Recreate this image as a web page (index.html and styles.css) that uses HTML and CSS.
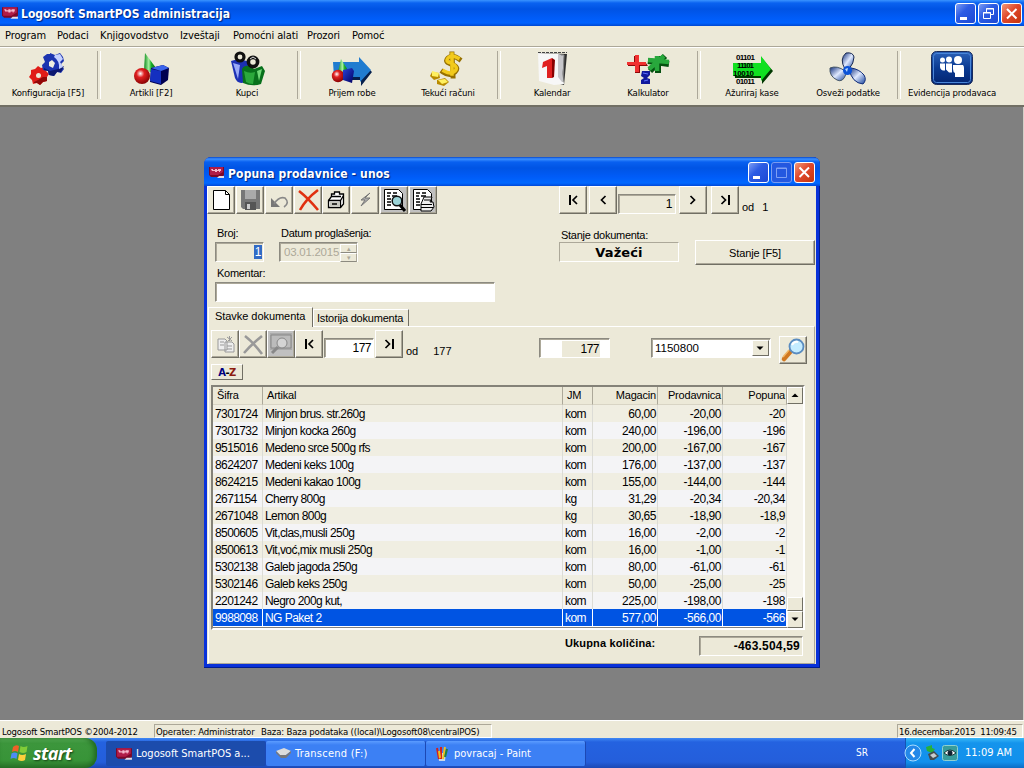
FILE: index.html
```html
<!DOCTYPE html>
<html lang="sr">
<head>
<meta charset="utf-8">
<title>Logosoft SmartPOS administracija</title>
<link rel="stylesheet" href="styles.css">
</head>
<body>
<svg class="defs" width="0" height="0">
  <defs>
    <radialGradient id="gRed" cx=".4" cy=".35" r=".7"><stop offset="0" stop-color="#fff"/><stop offset=".35" stop-color="#e02020"/><stop offset="1" stop-color="#800000"/></radialGradient>
    <linearGradient id="gGreen"><stop offset="0" stop-color="#0a8a1a"/><stop offset=".4" stop-color="#a8f0a0"/><stop offset=".6" stop-color="#18b028"/><stop offset="1" stop-color="#065c0c"/></linearGradient>
    <linearGradient id="gBlue" x1="0" y1="0" x2="1" y2="1"><stop offset="0" stop-color="#2a42d8"/><stop offset="1" stop-color="#000060"/></linearGradient>
    <linearGradient id="gBlade" x1="0" y1="0" x2="1" y2="1"><stop offset="0" stop-color="#0c2a78"/><stop offset=".5" stop-color="#dfe9ff"/><stop offset="1" stop-color="#16429c"/></linearGradient>
    <linearGradient id="gTile" x1="0" y1="0" x2="0" y2="1"><stop offset="0" stop-color="#2c62b8"/><stop offset=".5" stop-color="#0a3a92"/><stop offset="1" stop-color="#032470"/></linearGradient>
    <symbol id="logo" viewBox="0 0 16 13"><path d="M0 1H15V9L13 11H2L0 9Z" fill="#7c0828"/><path d="M1 1H14V6L9 9H1Z" fill="#b01c48"/><path d="M2 3h2v1h2v-1h2v1h1v-1h3v2h-1v1h-1v-1h-2v1h-2v-1h-3z" fill="#f5b8cc"/><path d="M8 12l2-2h5v2z" fill="#e6dce4"/></symbol>
    <symbol id="first" viewBox="0 0 28 28"><path d="M11 9v10" stroke="#000" stroke-width="2"/><path d="M18 10l-4 4 4 4" fill="none" stroke="#000" stroke-width="1.700"/></symbol>
    <symbol id="last" viewBox="0 0 28 28"><path d="M18 9v10" stroke="#000" stroke-width="2"/><path d="M10.500 10l4 4-4 4" fill="none" stroke="#000" stroke-width="1.700"/></symbol>
  </defs>
</svg>

<header class="titlebar">
  <svg width="17" height="14"><use href="#logo"/></svg>
  <h1>Logosoft SmartPOS administracija</h1>
  <div class="winbtns">
    <span class="wb"><svg width="20" height="20"><path d="M4 13h7v3H4z" fill="#fff"/></svg></span>
    <span class="wb"><svg width="20" height="20"><path d="M7.500 8V4.500h7v6H12M7 5h8" fill="none" stroke="#fff"/><path d="M4.500 8.500h7v6h-7zM4 9h8" fill="none" stroke="#fff"/></svg></span>
    <span class="wb close"><svg width="20" height="20"><path d="M5 5l9.500 9.500M14.500 5L5 14.500" stroke="#fff" stroke-width="2"/></svg></span>
  </div>
</header>

<nav class="menu"><span class="m1">Program</span><span class="m2">Podaci</span><span class="m3">Knjigovodstvo</span><span class="m4">Izveštaji</span><span class="m5">Pomoćni alati</span><span class="m6">Prozori</span><span class="m7">Pomoć</span></nav>

<section class="tools">
  <div class="group g0">
    <div class="tool">
      <svg width="44" height="36"><path d="M12 15l3 2 4-1 1 4 3 3-2 3v4l-4 1-3 3-3-2-4 1-1-4-3-3 2-3v-4l4-1z" fill="#e01c18"/><path d="M8 31l4-2 5-3 4 0v4l-4 1-3 3-3-2-3 0z" fill="#900808"/><circle cx="12.500" cy="24.500" r="2.500" fill="#ece9d8"/><path d="M24 2l5 2 5-2 3 4 1 4-3 3 3 5-3 4-4-1-3 4-5-1-1-4-5-1-1-5 3-3-2-5 4-3h3z" fill="#1c34b0"/><path d="M18 17l6 3 8-2 6-3-3 6-4 0-3 4-5-1-1-4-4-1z" fill="#0c1870"/><path d="M29 4l5-1 3 5-3 3 3 5-4 2q1-8-5-12z" fill="#c4d0ff"/><path d="M26 9l3 3-2 5-4-2v-4z" fill="#f0eee0"/></svg>
      <span>Konfiguracija [F5]</span></div>
  </div>
  <div class="group">
    <div class="tool">
      <svg width="44" height="36"><path d="M16 2L27 17l-5 4-7-1z" fill="url(#gGreen)"/><circle cx="13" cy="25" r="8" fill="url(#gRed)"/><path d="M22 17l12-3 6 3-1 12-7 5-11-3z" fill="#000050"/><path d="M22 18l10 2v13l-11-3z" fill="#1430c0"/><path d="M22 17l12-3 6 3-8 3z" fill="#3a64ec"/></svg>
      <span>Artikli [F2]</span></div>
    <div class="tool">
      <svg width="44" height="36"><path d="M6 10q8-3 19 1l-5 20q-7 3-10-4z" fill="#1c30b4"/><path d="M8 12l5 16 2-14z" fill="#9aaaf8"/><circle cx="15" cy="6" r="4" fill="none" stroke="#111" stroke-width="3.200"/><path d="M17 18q2-4 8-3l4 3 8-3 3 5-4 13q-9 3-18-1z" fill="#08701c"/><path d="M19 20q6 3 11 1l-2 12q-4 0-7-2z" fill="#2ba83c"/><path d="M32 20l5-2-3 12z" fill="#70d878"/><circle cx="28" cy="11" r="4.600" fill="none" stroke="#111" stroke-width="3.600"/><path d="M25 8l3-2 3 2" stroke="#ddd" fill="none"/></svg>
      <span>Kupci</span></div>
  </div>
  <div class="group">
    <div class="tool">
      <svg width="44" height="36"><path d="M4 12h25V8l13 13-11 14v-6H8z" fill="#06204c"/><path d="M3 11h26V6l12 13-11 12v-5H4z" fill="#207cd0"/><path d="M11 8l8 13H8z" fill="url(#gGreen)"/><circle cx="8" cy="25" r="6.200" fill="url(#gRed)"/><path d="M13 19l9-2 2 3-2 12-9-3z" fill="url(#gBlue)"/></svg>
      <span>Prijem robe</span></div>
    <div class="tool">
      <svg width="44" height="36"><g fill="none" stroke-linecap="square"><path d="M33 8q-7-5-11-1t3 6q9 3 4 8t-12 0M26 3l1 22" stroke="#967000" stroke-width="5"/><path d="M32 7q-7-4-10 0t3 5q8 4 4 8t-11 0M26 3l0 20" stroke="#f2ca1c" stroke-width="3.500"/></g><path d="M6 21l7 1 1 5-6 2-4-4zM11 29l8-2 4 4-5 4-7-2z" fill="#b88a00"/><path d="M6 20l7 2-1 4-6-1zM12 29l7-1 3 3-6 2z" fill="#fff060"/></svg>
      <span>Tekući računi</span></div>
  </div>
  <div class="group">
    <div class="tool">
      <svg width="44" height="36"><path d="M8 2l29 1-3 31-12-3z" fill="#303030"/><path d="M8 2l21 1 5 30-10 1-15-4z" fill="#f7f7f7"/><path d="M28 3l6 1-2 27-4-5z" fill="#c7c7cb"/><path d="M31 4l3 0-1 27" stroke="#888" fill="none"/><path d="M13 11l9-4v20h-5V15l-5 2z" fill="#e02020"/><path d="M22 7l3 2-1 17-2 1z" fill="#880000"/><path d="M8 1.500h29" stroke="#444" stroke-dasharray="3 1"/></svg>
      <span>Kalendar</span></div>
    <div class="tool">
      <svg width="44" height="36"><path d="M8 5h5v7h7l2 3h-8v7H9v-7H2v-4h6z" fill="#8c0808"/><path d="M9 4h4v7h7v3h-7v7H9v-7H1v-3h8z" fill="#f03030"/><g stroke="#055010" stroke-width="6"><path d="M32 5v17M22 10l21 3M39 5L24 20"/></g><g stroke="#28a83c" stroke-width="4.500"><path d="M31 5v15M22 9l21 2M38 5L23 18"/></g><path d="M16 20h8v4l-3 3 3 1v5h-9v-4l3-2-3-2z" fill="#10189c"/><path d="M17 22l5 1M18 30l4-1" stroke="#5c70ff"/></svg>
      <span>Kalkulator</span></div>
  </div>
  <div class="group">
    <div class="tool">
      <svg width="44" height="36"><path d="M4 13h27V6l12 14-11 13v-6H5z" fill="#003800"/><path d="M3 12h28V5l10 13-10 12v-5H3z" fill="#10e020"/><g class="bits"><text x="6" y="9" textLength="19">01101</text><text x="7" y="17" textLength="17">11101</text><text x="3" y="25" textLength="21">10010</text><text x="6" y="33" textLength="19">01011</text></g></svg>
      <span>Ažuriraj kase</span></div>
    <div class="tool">
      <svg width="44" height="36"><path d="M20 2q7-1 8 4 0 6-5 12h-4q-6-10 1-16z" fill="url(#gBlade)" stroke="#182850"/><path d="M19 20q-8-6-15-3-1 8 7 12 6 3 9-6z" fill="url(#gBlade)" stroke="#456"/><path d="M23 18q3 14 14 15 4-4 1-9-5-6-13-7z" fill="url(#gBlade)" stroke="#102c78"/><circle cx="21.500" cy="19.500" r="4.500" fill="#0a52d8"/><path d="M19 18l3-1-1 4z" fill="#bcdcff"/></svg>
      <span>Osveži podatke</span></div>
  </div>
  <div class="group last">
    <div class="tool">
      <svg width="44" height="36"><rect x="1.500" y=".5" width="41" height="33" rx="5" fill="url(#gTile)" stroke="#1a2c5c"/><rect x="3.500" y="2.500" width="37" height="29" rx="3" fill="none" stroke="#4a86d8"/><g fill="#fff"><circle cx="12.500" cy="9" r="2.500"/><circle cx="19" cy="8.500" r="3"/><circle cx="28" cy="9" r="4"/><path d="M10 12.500h5v7h-2q-3-1-3-4zM16 12.500h6v9h-3l-3-3zM23 14h10q1 1 1 3v9h-9v-4q-2-1-2-4z"/></g></svg>
      <span>Evidencija prodavaca</span></div>
  </div>
</section>

<main class="desk">
  <section class="win">
    <div class="wtitle">
      <svg width="16" height="13"><use href="#logo"/></svg>
      <h2>Popuna prodavnice - unos</h2>
      <div class="winbtns">
        <span class="wb"><svg width="19" height="19"><path d="M4 13h7v3H4z" fill="#fff"/></svg></span>
        <span class="wb off"><svg width="19" height="19"><path d="M4.500 5h10v9.500h-10zM4 5.500h11" fill="none" stroke="#7fa0f4"/></svg></span>
        <span class="wb close"><svg width="19" height="19"><path d="M4.500 4.500l9.500 9.500M14 4.500L4.500 14" stroke="#fff" stroke-width="2"/></svg></span>
      </div>
    </div>
    <div class="client">
      <div class="bar">
        <div class="iconrow">
          <span class="btn"><svg width="28" height="28"><path d="M6.500 4.500h12l4 4v15h-16z" fill="#fff" stroke="#000"/><path d="M18.500 4.500v4h4" fill="none" stroke="#000"/></svg></span>
          <span class="btn"><svg width="28" height="28"><path d="M5 4h19v19H7l-2-2z" fill="#777"/><path d="M9 4h11v9H9z" fill="#aaa"/><path d="M9 16h11v8H9z" fill="#555"/><path d="M11 18h3v5h-3z" fill="#ccc"/></svg></span>
          <span class="btn"><svg width="28" height="28"><path d="M6 12v9h9z" fill="#777"/><path d="M9 18q5-8 11-6 5 5-1 9" fill="none" stroke="#888" stroke-width="1.700"/></svg></span>
          <span class="btn"><svg width="28" height="28"><path d="M5 5q9 7 19 19M24 4Q12 13 6 24" stroke="#e03010" stroke-width="2.600" fill="none"/></svg></span>
          <span class="btn"><svg width="28" height="28"><path d="M6.500 14.500l3-4V8h3V6h5v2h4v10l-3 3.500H6.500z" fill="#fff" stroke="#000" stroke-width="1.300"/><path d="M10 10.500h9M6.500 14.500h12l3-5M18.500 14.500v7" fill="none" stroke="#000" stroke-width="1.300"/><path d="M8 16h10v5H8z" fill="#c8c8c0"/><path d="M10 18h5" stroke="#000" stroke-width="1.500"/></svg></span>
          <span class="btn"><svg width="28" height="28"><path d="M19 7l-9 7h4l-4 6 9-8h-5z" fill="#aaa" stroke="#777"/></svg></span>
          <span class="btn dk"><svg width="28" height="28"><path d="M4.500 3.500h14l4 4v16h-18z" fill="#fff" stroke="#000"/><path d="M7 7h4M13 7h4M7 10h3M12 10h5M7 13h4M7 16h4M7 19h4" stroke="#000" stroke-width="1.300"/><circle cx="17" cy="15" r="4.800" fill="#9cd4d8" stroke="#111" stroke-width="1.500"/><path d="M20 19l5 6" stroke="#000" stroke-width="3"/></svg></span>
          <span class="btn dk"><svg width="28" height="28"><path d="M4.500 3.500h14l4 4v16h-18z" fill="#fff" stroke="#000"/><path d="M7 7h4M13 7h4M7 10h3M12 10h5M7 13h4M7 16h4M7 19h4" stroke="#000" stroke-width="1.300"/><path d="M12 18l3-7h8l-2 5h3l1 5-3 4H12z" fill="#eee" stroke="#000"/><path d="M12 18.500h11M12 21.500h12M15 14h6" stroke="#000"/></svg></span>
        </div>
        <span class="btn n1"><svg width="28" height="28"><use href="#first"/></svg></span>
        <span class="btn n2"><svg width="28" height="28"><path d="M16.500 10l-4 4 4 4" fill="none" stroke="#000" stroke-width="1.700"/></svg></span>
        <span class="fld n3">1</span>
        <span class="btn n4"><svg width="28" height="28"><path d="M11.500 10l4 4-4 4" fill="none" stroke="#000" stroke-width="1.700"/></svg></span>
        <span class="btn n5"><svg width="28" height="28"><use href="#last"/></svg></span>
        <span class="od">od<b>1</b></span>
      </div>

      <div class="form">
        <div class="col c1"><label>Broj:</label><span class="fld"><mark>1</mark></span></div>
        <div class="col c2"><label>Datum proglašenja:</label><span class="fld date">03.01.2015<i><u>▴</u><u>▾</u></i></span></div>
        <div class="col c3"><label>Stanje dokumenta:</label><span class="thin state">Važeći</span></div>
        <button class="stanje">Stanje [F5]</button>
      </div>
      <div class="comment"><label>Komentar:</label><span class="fld white"></span></div>

      <div class="tabs"><span class="tab on">Stavke dokumenta</span><span class="tab">Istorija dokumenta</span></div>
      <div class="panel">
        <div class="bar2">
          <span class="btn"><svg width="28" height="28"><path d="M7 9h7l2 2v9H7zM14 12h7l2 2v8h-9z" fill="#eee" stroke="#999"/><path d="M9 12h4M9 15h4M16 16h5M16 19h5M16 7l5 4M21 7l-4 4M18.500 6v5" stroke="#999"/></svg></span>
          <span class="btn"><svg width="28" height="28"><path d="M6 6q8 6 17 18M23 6Q13 14 5 23" stroke="#999" stroke-width="2.600" fill="none"/></svg></span>
          <span class="btn dk"><svg width="28" height="28"><path d="M3 3h22v17H3z" fill="#aaa"/><path d="M4 5h20v13H4z" fill="#bbb" stroke="#888"/><circle cx="15" cy="13" r="5" fill="#d4d4d4" stroke="#888"/><path d="M11 17l-6 6" stroke="#888" stroke-width="3"/></svg></span>
          <span class="btn"><svg width="28" height="28"><use href="#first"/></svg></span>
          <span class="fld white p1">177</span>
          <span class="btn"><svg width="28" height="28"><use href="#last"/></svg></span>
          <span class="od od2">od<b>177</b></span>
          <span class="fld white p2"><em>177</em></span>
          <span class="fld white combo">1150800<i><svg width="14" height="14"><path d="M3.500 5.500h7L7 9z"/></svg></i></span>
          <span class="btn find"><svg width="28" height="28"><path d="M5 23l7-8" stroke="#d07820" stroke-width="4.500" stroke-linecap="round"/><path d="M4 21l6-7" stroke="#f0b868" stroke-width="1.500"/><circle cx="17.500" cy="10.500" r="7" fill="#c4ecff" stroke="#5a8cc0" stroke-width="1.800"/><path d="M13 9q2-4 6-3" stroke="#fff" stroke-width="2" fill="none"/></svg></span>
        </div>
        <div class="azrow"><span class="az"><b class="a">A</b>-<b class="z">Z</b></span></div>
        <div class="grid">
          <div class="rows">
            <div class="row head"><span>Šifra</span><span>Artikal</span><span>JM</span><span>Magacin</span><span>Prodavnica</span><span>Popuna</span></div>
            <div class="row"><span>7301724</span><span>Minjon brus. str.260g</span><span>kom</span><span>60,00</span><span>-20,00</span><span>-20</span></div>
            <div class="row"><span>7301732</span><span>Minjon kocka 260g</span><span>kom</span><span>240,00</span><span>-196,00</span><span>-196</span></div>
            <div class="row"><span>9515016</span><span>Medeno srce 500g rfs</span><span>kom</span><span>200,00</span><span>-167,00</span><span>-167</span></div>
            <div class="row"><span>8624207</span><span>Medeni keks 100g</span><span>kom</span><span>176,00</span><span>-137,00</span><span>-137</span></div>
            <div class="row"><span>8624215</span><span>Medeni kakao 100g</span><span>kom</span><span>155,00</span><span>-144,00</span><span>-144</span></div>
            <div class="row"><span>2671154</span><span>Cherry 800g</span><span>kg</span><span>31,29</span><span>-20,34</span><span>-20,34</span></div>
            <div class="row"><span>2671048</span><span>Lemon 800g</span><span>kg</span><span>30,65</span><span>-18,90</span><span>-18,9</span></div>
            <div class="row"><span>8500605</span><span>Vit,clas,musli 250g</span><span>kom</span><span>16,00</span><span>-2,00</span><span>-2</span></div>
            <div class="row"><span>8500613</span><span>Vit,voć,mix musli 250g</span><span>kom</span><span>16,00</span><span>-1,00</span><span>-1</span></div>
            <div class="row"><span>5302138</span><span>Galeb jagoda 250g</span><span>kom</span><span>80,00</span><span>-61,00</span><span>-61</span></div>
            <div class="row"><span>5302146</span><span>Galeb keks 250g</span><span>kom</span><span>50,00</span><span>-25,00</span><span>-25</span></div>
            <div class="row"><span>2201242</span><span>Negro 200g kut,</span><span>kom</span><span>225,00</span><span>-198,00</span><span>-198</span></div>
            <div class="row sel"><span>9988098</span><span>NG Paket 2</span><span>kom</span><span>577,00</span><span>-566,00</span><span>-566</span></div>
          </div>
          <div class="scroll"><i class="sb"><svg width="14" height="14"><path d="M3.500 9h7L7 5.500z"/></svg></i><i class="thumb"></i><i class="sb"><svg width="14" height="14"><path d="M3.500 5.500h7L7 9z"/></svg></i></div>
        </div>
        <div class="total"><strong>Ukupna količina:</strong><span class="fld">-463.504,59</span></div>
      </div>
    </div>
  </section>
</main>

<footer class="status"><span class="s1">Logosoft SmartPOS ©2004-2012</span><span class="s2"><span class="s2a">Operater: Administrator</span><span>Baza: Baza podataka ((local)\Logosoft08\centralPOS)</span></span><span class="s3">16.decembar.2015&nbsp; 11:09:45</span></footer>

<div class="taskbar">
  <div class="start"><svg width="20" height="20"><path d="M3 4q3-3 6-1L8 9Q5 7 2 9z" fill="#f06028"/><path d="M10.500 3q3 2 7 0l-1 6q-3 2-7 0z" fill="#80cc38"/><path d="M1.500 10.500q3-2 6 0L6.500 16q-3-2-6 0z" fill="#4c8cf4"/><path d="M9 11q3 2 7 0l-1 6q-3 2-7 0z" fill="#fcd03c"/></svg><span>start</span></div>
  <div class="task act"><svg width="17" height="14"><use href="#logo"/></svg><span>Logosoft SmartPOS a...</span></div>
  <div class="task"><svg width="17" height="14"><path d="M1 4l8-3 7 3-5 4H5z" fill="#dcdcdc"/><path d="M1 4l4 4h6l5-4v2l-5 5H6L1 6z" fill="#77777a"/></svg><span class="k2">Transcend (F:)</span></div>
  <div class="task"><svg width="16" height="17"><path d="M3 8h8l-1 8H4z" fill="#c8d8e8"/><path d="M4 14L2 3M6 14L6 2" stroke="#d02020" stroke-width="2"/><path d="M8 14l2-12M5 13L4 6" stroke="#f0c020" stroke-width="2"/><path d="M10 12l2-8" stroke="#208040" stroke-width="2"/></svg><span>povracaj - Paint</span></div>
  <span class="lang">SR</span>
  <div class="tray"><span class="chev"><svg width="18" height="18"><circle cx="9" cy="9" r="8" fill="#2488e8" stroke="#a8dcff"/><path d="M10.500 5L7 9l3.500 4" fill="none" stroke="#fff" stroke-width="2"/></svg></span><svg width="14" height="16"><path d="M1 2l6-2v3l3 1-3 4-5-2z" fill="#28b038"/><path d="M3 9l6-3 5 5-5 4H5z" fill="#444c50"/><path d="M5 10l4-2 3 3-4 2z" fill="#c8ccd0"/></svg><svg width="16" height="16"><rect x=".5" y=".5" width="15" height="15" rx="2" fill="#389c9c" stroke="#90d0d0"/><path d="M2 8q6-6 12 0-6 5-12 0" fill="#fff" stroke="#143838"/><circle cx="8" cy="8" r="2.500" fill="#123"/></svg><span class="clock">11:09 AM</span></div>
</div>
</body>
</html>
```
FILE: styles.css
```css
* { box-sizing: border-box; }
body { margin: 0; width: 1024px; height: 768px; overflow: hidden; display: flex; flex-direction: column; background: #ece9d8; color: #000; font: 11px/14px "DejaVu Sans Condensed", "DejaVu Sans", sans-serif; white-space: nowrap; }
svg { display: block; flex: none; }
.defs { position: absolute; }
h1, h2 { margin: 2px 0 0; color: #fff; font: bold 12px/16px "DejaVu Sans Condensed", "DejaVu Sans", sans-serif; text-shadow: 1px 1px 1px #02247c; }
h1 { letter-spacing: 0; }
h2 { letter-spacing: .15px; }

.titlebar { flex: none; height: 26px; padding: 0 2px 0 2px; display: flex; align-items: center; gap: 2px; background: linear-gradient(#3a94ff 0, #0a62f0 3px, #0053e4 9px, #005cf8 18px, #0062ff 23px, #0048d0 26px); }
.winbtns { margin-left: auto; display: flex; gap: 2px; }
.wb { width: 21px; height: 21px; border: 1px solid #fff; border-radius: 3px; background: linear-gradient(135deg, #7c9cf4, #2c5ce4 40%, #1c48d4); overflow: hidden; }
.wb.close { background: linear-gradient(135deg, #f09878, #e0482c 45%, #c4340c); }
.wb.off { background: #2458e0; border-color: #7a9cf0; }

.menu { flex: none; height: 20px; padding: 3px 0 0 5px; display: flex; }
.menu span { font-size: 11px; letter-spacing: -.1px; }
.m1 { width: 52px; } .m2 { width: 43px; } .m3 { width: 80px; } .m4 { width: 53px; } .m5 { width: 74px; } .m6 { width: 45px; }

.tools { flex: none; height: 61px; border-top: 1px solid #aca899; border-bottom: 2px solid #716f64; box-shadow: inset 0 1px #fff; display: flex; padding-top: 4px; }
.group { flex: none; display: flex; width: 200px; padding-left: 5px; position: relative; }
.g0 { width: 99px; padding-left: 0; }
.g0 + .group { padding-left: 4px; }
.group.last { width: 121px; }
.group:not(.last)::after { content: ""; position: absolute; right: -2px; top: 0; width: 2px; height: 48px; border-left: 1px solid #aca899; border-right: 1px solid #fff; }
.tool { width: 96px; display: flex; flex-direction: column; align-items: center; }
.tool span { font-size: 9.500px; line-height: 12px; letter-spacing: -.15px; }
.bits { font: bold 8px "Liberation Sans", sans-serif; }

.desk { flex: none; height: 613px; background: #808080; position: relative; border-right: 1px solid #d4d0c8; }
.win { position: absolute; left: 204px; top: 50px; width: 616px; height: 511px; padding: 0 3px 3px; border-radius: 7px 7px 0 0; background: #0831d9; border-right: 1px solid #001c90; border-bottom: 1px solid #001c90; }
.wtitle { height: 29px; margin: 0 -4px 0 -3px; border-radius: 7px 7px 0 0; padding: 2px 5px 0 5px; display: flex; align-items: center; gap: 3px; background: linear-gradient(#0848c8 0, #3c90ff 2px, #0860f0 5px, #0054e4 11px, #005cf8 20px, #0068ff 26px, #0048d8 29px); }
.client { height: 478px; background: #ece9d8; padding: 0 1px; font: 11px/14px "Liberation Sans", Arial, sans-serif; display: flex; flex-direction: column; }
.client > * { flex: none; }

.btn { display: block; flex: none; width: 28px; height: 28px; background: #ece9d8; border: 1px solid; border-color: #fff #716f64 #716f64 #fff; box-shadow: inset -1px -1px #aca899; }
.btn svg { margin: -1px; }
.btn.dk { background: #c0c0c0; }
.fld { display: block; flex: none; height: 20px; border: 1px solid; border-color: #8c8a80 #fff #fff #8c8a80; box-shadow: inset 1px 1px #aca899; text-align: right; line-height: 18px; padding: 0 3px; font-size: 12px; letter-spacing: -.5px; background: #ece9d8; }
.white { background: #fff; }
.bar { height: 28px; display: flex; align-items: flex-end; margin-left: -1px; }
.iconrow { display: flex; gap: .85px; width: 352px; }
.n2 { margin-left: 2px; }
.n3 { width: 58px; margin-left: 1px; }
.n4 { margin-left: 3px; }
.n5 { margin-left: 4px; }
.od { margin-left: 3px; font-size: 11px; line-height: 14px; }
.od b { font-weight: normal; margin-left: 8px; }

.form { height: 51px; display: flex; padding: 12px 0 0 7px; align-items: flex-start; }
.col { display: flex; flex-direction: column; }
label { font-size: 11px; line-height: 14px; margin-left: 2px; letter-spacing: -.28px; }
.c1 { width: 64px; }
.c1 .fld { width: 49px; margin-top: 2px; padding: 2px 1px; line-height: 14px; }
mark { background: #316ac5; color: #fff; padding: 1px; display: inline-block; line-height: 12px; }
.c2 { width: 280px; }
.date { width: 79px; margin-top: 2px; text-align: left; color: #aca899; display: flex; padding: 0 0 0 4px; font-size: 11.500px; letter-spacing: -.25px; }
.date i { margin: 1px 0 0 auto; width: 17px; font-style: normal; }
.date u { display: block; text-decoration: none; height: 9px; line-height: 7px; font-size: 7px; text-align: center; border: 1px solid; border-color: #fff #aca899 #8c8a80 #fff; }
.c3 { width: 136px; margin-top: 2px; }
.thin { width: 120px; height: 20px; border: 1px solid; border-color: #aca899 #fff #fff #aca899; text-align: center; }
.state { font: bold 13px/19px "DejaVu Sans", sans-serif; letter-spacing: .1px; }
.stanje { width: 120px; height: 25px; margin: 14px 0 0; padding: 0; font: 11px/14px "Liberation Sans", sans-serif; letter-spacing: -.1px; color: #000; background: #ece9d8; border: 1px solid; border-color: #fff #716f64 #716f64 #fff; box-shadow: inset -1px -1px #aca899; }
.comment { height: 42px; padding: 1px 0 0 7px; }
.comment label, .comment .fld { display: block; }
.comment .fld { width: 280px; margin-top: 2px; }

.tabs { height: 19px; display: flex; align-items: flex-end; }
.tab { height: 17px; width: 96px; padding: 1px 0 0 3px; border: 1px solid; border-color: #fff #716f64 transparent #fff; border-bottom: 0; letter-spacing: -.2px; }
.tab.on { height: 20px; width: 105px; margin-bottom: -1px; padding: 1px 0 0 6px; background: #ece9d8; z-index: 1; letter-spacing: -.05px; }
.panel { height: 338px; border: 1px solid; border-color: #fff #aca899 #aca899 #fff; padding: 3px 0 0 2px; }
.bar2 { height: 34px; display: flex; align-items: flex-start; }
.p1 { width: 50px; margin: 8px 1px 0; padding: 0 2px; }
.od2 { margin-top: 14px; width: 133px; }
.od2 b { margin-left: 15px; }
.p2 { width: 71px; margin: 8px 41px 0 0; padding: 2px 9px 0 22px; }
.p2 em { display: block; font-style: normal; background: #ece9d8; line-height: 17px; height: 16px; padding-right: 1px; }
.combo { width: 120px; margin: 8px 8px 0 0; display: flex; text-align: left; padding: 1px 1px 1px 3px; line-height: 16px; font-size: 11.500px; letter-spacing: 0; }
.combo i, .sb, .thumb { display: block; background: #ece9d8; border: 1px solid; border-color: #fff #716f64 #716f64 #fff; }
.combo i { margin-left: auto; width: 17px; height: 16px; }
.find { margin-top: 6px; }
.azrow { height: 21px; }
.az { display: block; width: 32px; height: 16px; text-align: center; font: bold 10px/15px "DejaVu Sans", sans-serif; border: 1px solid; border-color: #fff #716f64 #716f64 #fff; letter-spacing: -.5px; }
.a { color: #000080; } .z { color: #8c1c10; }

.grid { width: 594px; height: 245px; border: 2px solid; border-color: #848278 #fff #fff #848278; background: #808080; display: flex; }
.rows { width: 574px; height: 239px; }
.row { display: grid; grid-template-columns: 50px 300px 30px 65px 65px 64px; height: 17px; line-height: 19px; font-size: 12px; letter-spacing: -.55px; background: #f4f4f6; }
.row:nth-child(even) { background: #f0eee2; }
.row span { height: 17px; border-right: 1px solid #dcdcd6; padding-left: 2px; }
.row span:first-child { padding-left: 2px; letter-spacing: -.6px; }
.row span:nth-child(n+4) { text-align: right; padding-right: 1px; letter-spacing: -.45px; }
.row.head { height: 18px; line-height: 17px; background: #ece9d8; font-size: 11px; }
.row.head span { height: 18px; border-color: #aca899; padding-left: 4px; border-bottom: 1px solid #d8d4c4; letter-spacing: -.2px; }
.row.sel { background: #0054e3; color: #fff; height: 18px; border-bottom: 1px solid #fff; }
.row.sel span { border-color: #fff; }
.scroll { width: 16px; height: 241px; display: flex; flex-direction: column; background: #f6f4ec; }
.sb { width: 16px; height: 17px; }
.thumb { height: 14px; margin-top: auto; }
.total { display: flex; height: 27px; padding: 5px 0 0 354px; }
.total strong { width: 134px; margin-top: 1px; font-size: 11px; letter-spacing: .15px; }
.total .fld { width: 104px; font: bold 12px/18px "Liberation Sans", sans-serif; letter-spacing: .2px; padding: 0 2px; margin-top: 1px; }

.status { flex: none; height: 18px; display: flex; font-size: 9.500px; line-height: 14px; padding: 3px 0 0 2px; border-top: 1px solid #fff; letter-spacing: -.15px; }
.s1 { width: 152px; padding-top: 1px; }
.s2 { width: 338px; border: 1px solid; border-color: #aca899 #fff #fff #aca899; padding-left: 1px; display: flex; }
.s2a { width: 105px; }
.s3 { margin: 0 1px 0 auto; width: 126px; border: 1px solid; border-color: #aca899 #fff #fff #aca899; padding-left: 1px; letter-spacing: -.25px; }

.taskbar { flex: none; height: 30px; display: flex; background: linear-gradient(#4088f4 0, #2462e0 4px, #245edb 24px, #1c48b4 30px); color: #fff; font-size: 11px; }
.start { width: 97px; margin-right: 9px; display: flex; align-items: center; padding-left: 10px; gap: 3px; border-radius: 0 12px 12px 0; background: linear-gradient(#5cb45c 0, #3c963c 5px, #389438 22px, #2a742a 30px); box-shadow: inset -3px 0 5px #206820; }
.start span { font: italic bold 18px/24px "Open Sans", sans-serif; letter-spacing: -.6px; text-shadow: 1px 1px 2px #144014; }
.task { width: 160px; height: 25px; margin: 3px 0 0; border-radius: 2px; background: linear-gradient(#5c9cff, #3c80f4 4px, #3c80f4); border-right: 1px solid #1c48b4; display: flex; align-items: center; padding-left: 9px; gap: 3px; }
.task.act { background: #1c4cac; padding-left: 10px; }
.k2 { letter-spacing: .25px; }
.lang { margin-left: auto; width: 49px; padding-top: 8px; font-size: 10px; }
.tray { width: 119px; border-left: 1px solid #1454b4; background: linear-gradient(#38b8f8 0, #1494ec 5px, #1290ec 24px, #0c6cc4 30px); display: flex; align-items: center; gap: 3px; }
.chev { margin-left: -2px; }
.clock { margin-left: 4px; }
```
